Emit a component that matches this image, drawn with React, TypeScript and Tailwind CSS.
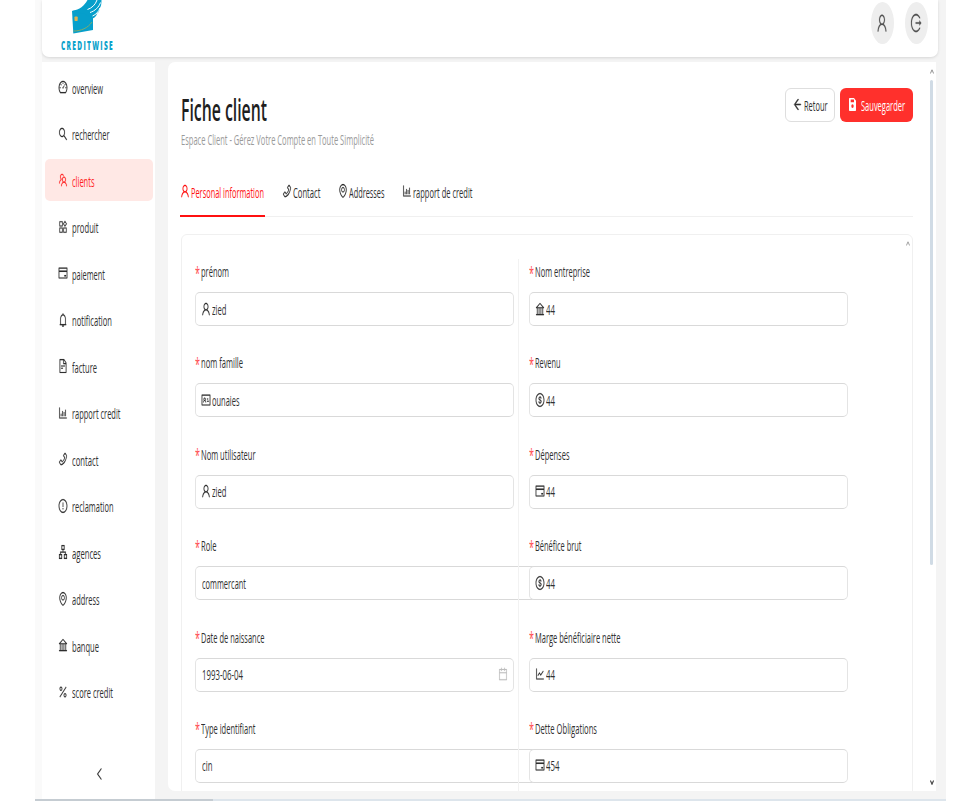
import { useLayoutEffect, useRef, useState } from "react";
import type { ReactNode } from "react";
import type { IconType } from "react-icons";
import {
  AiOutlineApartment,
  AiOutlineArrowLeft,
  AiOutlineBank,
  AiOutlineBarChart,
  AiOutlineBell,
  AiOutlineCalendar,
  AiOutlineCreditCard,
  AiOutlineDashboard,
  AiOutlineDollar,
  AiOutlineEnvironment,
  AiOutlineExclamationCircle,
  AiOutlineFileText,
  AiOutlineIdcard,
  AiOutlineLeft,
  AiOutlineLineChart,
  AiOutlineLogout,
  AiOutlinePercentage,
  AiOutlinePhone,
  AiOutlineProduct,
  AiOutlineSearch,
  AiOutlineTeam,
  AiOutlineUser,
} from "react-icons/ai";

/** Condensed text: squeezes its content horizontally to the given width. */
function Narrow({ w, children, className = "" }: { w: number; children: ReactNode; className?: string }) {
  const ref = useRef<HTMLSpanElement>(null);
  const [scale, setScale] = useState(0.55);
  useLayoutEffect(() => {
    if (ref.current) setScale(w / ref.current.getBoundingClientRect().width * scale);
    // eslint-disable-next-line
  }, [w]);
  return (
    <span className={`block shrink-0 ${className}`} style={{ width: w }}>
      <span
        ref={ref}
        className="inline-block origin-left whitespace-nowrap"
        style={{ transform: `scaleX(${scale})` }}
      >
        {children}
      </span>
    </span>
  );
}

function Icon({ as: As, className = "h-[16px] w-[10px]" }: { as: IconType; className?: string }) {
  return <As preserveAspectRatio="none" className={`shrink-0 stroke-[10px] ${className}`} />;
}

const menu: { label: string; w: number; icon: IconType }[] = [
  { label: "overview", w: 31, icon: AiOutlineDashboard },
  { label: "rechercher", w: 37.5, icon: AiOutlineSearch },
  { label: "clients", w: 22.5, icon: AiOutlineTeam },
  { label: "produit", w: 26.5, icon: AiOutlineProduct },
  { label: "paiement", w: 33, icon: AiOutlineCreditCard },
  { label: "notification", w: 40, icon: AiOutlineBell },
  { label: "facture", w: 25, icon: AiOutlineFileText },
  { label: "rapport credit", w: 48.5, icon: AiOutlineBarChart },
  { label: "contact", w: 26.5, icon: AiOutlinePhone },
  { label: "reclamation", w: 41.5, icon: AiOutlineExclamationCircle },
  { label: "agences", w: 29, icon: AiOutlineApartment },
  { label: "address", w: 27.5, icon: AiOutlineEnvironment },
  { label: "banque", w: 27, icon: AiOutlineBank },
  { label: "score credit", w: 41, icon: AiOutlinePercentage },
];

type FieldData = {
  label: string;
  lw: number;
  value: string;
  vw: number;
  icon?: IconType;
  wide?: boolean;
  date?: boolean;
};

const leftFields: FieldData[] = [
  { label: "prénom", lw: 28, value: "zied", vw: 14.5, icon: AiOutlineUser },
  { label: "nom famille", lw: 42, value: "ounaies", vw: 27.5, icon: AiOutlineIdcard },
  { label: "Nom utilisateur", lw: 54.5, value: "zied", vw: 14.5, icon: AiOutlineUser },
  { label: "Role", lw: 15.5, value: "commercant", vw: 44, wide: true },
  { label: "Date de naissance", lw: 63.5, value: "1993-06-04", vw: 41, date: true },
  { label: "Type identifiant", lw: 54.5, value: "cin", vw: 10.5, wide: true },
];

const rightFields: FieldData[] = [
  { label: "Nom entreprise", lw: 55, value: "44", vw: 9, icon: AiOutlineBank },
  { label: "Revenu", lw: 25.5, value: "44", vw: 9, icon: AiOutlineDollar },
  { label: "Dépenses", lw: 34.5, value: "44", vw: 9, icon: AiOutlineCreditCard },
  { label: "Bénéfice brut", lw: 46.5, value: "44", vw: 9, icon: AiOutlineDollar },
  { label: "Marge bénéficiaire nette", lw: 85.5, value: "44", vw: 9, icon: AiOutlineLineChart },
  { label: "Dette Obligations", lw: 62, value: "454", vw: 13.5, icon: AiOutlineCreditCard },
];

function Field({ f }: { f: FieldData }) {
  return (
    <div className="h-[91.4px] shrink-0">
      <div className="flex h-[33px] items-center pb-[9px]">
        <Narrow w={5} className="mr-[1px] pt-[3px] text-[18px] leading-[22px] text-[#ff4d4f]">*</Narrow>
        <Narrow w={f.lw}>{f.label}</Narrow>
      </div>
      <div
        className={`flex h-[34px] items-center rounded-[5px] border border-x-[#e4e4e4] border-y-[#d9d9d9] bg-white pb-[1px] ${
          f.icon ? "pl-[5px]" : "pl-[6px]"
        } pr-[5px] ${f.wide ? "w-[345px]" : "w-[319px]"}`}
      >
        {f.icon && <Icon as={f.icon} className="mr-[0.5px] h-[16px] w-[10px]" />}
        <Narrow w={f.vw}>{f.value}</Narrow>
        {f.date && <Icon as={AiOutlineCalendar} className="ml-auto h-[16px] w-[10px] text-[#bfbfbf]" />}
      </div>
    </div>
  );
}

function Logo() {
  return (
    <div className="flex w-[52px] flex-col items-center">
      <svg width="52" height="38" viewBox="0 0 52 38">
        <path d="M11 11 L32 7.500 L32 30 L12.300 33.500 Z" fill="#069fcb" />
        <path
          d="M11 11 C19 9.500 23 6 26.500 0 L40.500 0 C40.500 4 40 7 38.500 8.500 C38.500 11 37.500 12.500 36 13.500 C35.500 16 34 17.500 31.500 18.500 L24 14 Z"
          fill="#069fcb"
        />
        <path
          d="M26.500 9.500 C31 8 34.500 4.500 36 0 M29 12.500 C34 11 38 7 39.500 2.500 M31.500 16 C35 14.500 37.500 12 39 8"
          stroke="#fff"
          strokeWidth="1"
          fill="none"
        />
        <rect x="13.500" y="16.500" width="3.200" height="4.500" rx="0.800" fill="#e0b352" />
        <path d="M12.500 31 C20 31 27 28 31 22" stroke="#7fac6c" strokeWidth="1" fill="none" />
      </svg>
      <Narrow w={53} className="mt-[1px] ml-[1px] text-[11.5px] leading-[14px] font-extrabold tracking-[2.3px] text-[#0ba2cb]">
        CREDITWISE
      </Narrow>
    </div>
  );
}

function SaveGlyph() {
  return (
    <svg className="h-[13px] w-[7px] shrink-0" viewBox="0 0 7 13" preserveAspectRatio="none">
      <path
        fillRule="evenodd"
        fill="currentColor"
        d="M0.700 0 H5 L7 2.800 V12.200 Q7 13 6.300 13 H0.700 Q0 13 0 12.200 V0.800 Q0 0 0.700 0 Z M1.700 1.600 V4.200 H5 V1.600 Z M3.500 6.200 A1.200 1.900 0 1 0 3.500 10 A1.200 1.900 0 1 0 3.500 6.200 Z"
      />
    </svg>
  );
}

const tabs: { label: string; w: number; icon: IconType }[] = [
  { label: "Personal information", w: 73, icon: AiOutlineUser },
  { label: "Contact", w: 27.5, icon: AiOutlinePhone },
  { label: "Addresses", w: 35.5, icon: AiOutlineEnvironment },
  { label: "rapport de credit", w: 59.5, icon: AiOutlineBarChart },
];

export default function App() {
  return (
    <div className="h-[812px] w-[953px] overflow-hidden bg-white pl-[35px] font-['Open_Sans','Noto_Sans',sans-serif] text-[15px] leading-[22px] text-[#303030]">
      <div className="flex h-[799px] w-[911px] flex-col bg-[#f4f4f4]">
        <header className="flex h-[62px] shrink-0 bg-linear-to-r from-[#fafafa] from-[7px] to-[#f4f4f4] to-[7px] pr-[8px] pl-[7px]">
          <div className="flex h-[57px] w-full items-start justify-between rounded-b-[7px] bg-white pr-[10.5px] pl-[19px] shadow-[0_1px_3px_rgba(0,0,0,0.12)]">
            <Logo />
            <div className="flex gap-[11px] pt-[2px] text-[#505050]">
              <div className="flex h-[42px] w-[23px] items-center justify-center rounded-[50%] bg-[#eeeeee]">
                <Icon as={AiOutlineUser} className="h-[22px] w-[12px]" />
              </div>
              <div className="flex h-[42px] w-[23px] items-center justify-center rounded-[50%] bg-[#eeeeee]">
                <Icon as={AiOutlineLogout} className="h-[22px] w-[12px]" />
              </div>
            </div>
          </div>
        </header>

        <div className="flex min-h-0 flex-1">
          <div className="w-[7px] shrink-0 bg-[#fafafa]" />
          <nav className="flex w-[113px] shrink-0 flex-col bg-white pr-[2px] pl-[3px] pt-[4px]">
            {menu.map((m) => (
              <div
                key={m.label}
                className={`mb-[4.5px] flex h-[42px] shrink-0 items-center rounded-[5px] pl-[12.5px] ${
                  m.label === "clients" ? "bg-[#ffe8e5] text-[#ff2222]" : ""
                }`}
              >
                <Icon as={m.icon} className="mr-[4.5px] h-[16px] w-[10px]" />
                <Narrow w={m.w} className="pt-[1px]">{m.label}</Narrow>
              </div>
            ))}
            <div className="flex flex-1 items-center justify-center pt-[32px]">
              <Icon as={AiOutlineLeft} className="h-[16px] w-[9px]" />
            </div>
          </nav>

          <main className="ml-[13px] flex h-[729px] w-[768px] shrink-0 overflow-hidden rounded-l-[7px] bg-white pt-[1px]">
            <div className="flex w-[745px] flex-col overflow-hidden pl-[13px]">
              <div className="flex h-[113px] shrink-0 justify-between">
                <div className="pt-[28px]">
                  <Narrow w={86} className="h-[37px] text-[30px] leading-[38px] font-semibold text-[#1f1f1f]">
                    Fiche client
                  </Narrow>
                  <Narrow w={193} className="text-[#9a9a9a]">
                    Espace Client - Gérez Votre Compte en Toute Simplicité
                  </Narrow>
                </div>
                <div className="flex gap-[5px] pt-[25px]">
                  <div className="flex h-[34px] w-[50px] items-center justify-center gap-[2px] rounded-[6px] border border-[#dedede] pb-[1px]">
                    <Icon as={AiOutlineArrowLeft} className="h-[15px] w-[9px] stroke-[45px]" />
                    <Narrow w={23.5}>Retour</Narrow>
                  </div>
                  <div className="flex h-[34px] w-[73px] items-center justify-center gap-[5px] rounded-[6px] bg-[#ff302c] pb-[1px] text-white">
                    <SaveGlyph />
                    <Narrow w={44}>Sauvegarder</Narrow>
                  </div>
                </div>
              </div>

              <div className="flex h-[41px] shrink-0 gap-[17.3px] border-b border-[#f0f0f0]">
                {tabs.map((t, i) => (
                  <div
                    key={t.label}
                    className={`flex h-[41px] items-start gap-[1px] pt-[5px] ${
                      i === 0 ? "-ml-[1px] w-[85px] border-b-2 border-[#ff1010] text-[#ff1010]" : ""
                    }`}
                  >
                    <Icon as={t.icon} className="mt-[2px] h-[16px] w-[10px]" />
                    <Narrow w={t.w}>{t.label}</Narrow>
                  </div>
                ))}
              </div>

              <div className="mt-[17px] flex h-[600px] shrink-0 rounded-t-[6px] border border-[#f0f0f0] pt-[24px] pl-[13px]">
                <div className="w-[323px] shrink-0">
                  {leftFields.map((f) => (
                    <Field key={f.label} f={f} />
                  ))}
                </div>
                <div className="z-10 w-[330px] shrink-0 border-l border-[#f2f2f2] pl-[10px]">
                  {rightFields.map((f) => (
                    <Field key={f.label} f={f} />
                  ))}
                </div>
                <svg className="-mt-[18px] ml-auto mr-[2px] h-[5px] w-[4px] text-[#999]" viewBox="0 0 5 5" preserveAspectRatio="none">
                  <path d="M0.500 4.500 L2.500 0.800 L4.500 4.500" stroke="currentColor" fill="none" />
                </svg>
              </div>
            </div>

            <div className="ml-auto flex w-[10px] flex-col items-center py-[6px] pl-[1px]">
              <svg className="h-[5px] w-[4px] text-[#888]" viewBox="0 0 5 5" preserveAspectRatio="none">
                <path d="M0.500 4.500 L2.500 0.800 L4.500 4.500" stroke="currentColor" fill="none" />
              </svg>
              <div className="mt-[6px] h-[485px] w-[3px] rounded-full bg-[#d0dbe5]" />
              <svg className="mt-auto h-[5px] w-[4px] text-[#444]" viewBox="0 0 5 5" preserveAspectRatio="none">
                <path d="M0.500 0.500 L2.500 4.200 L4.500 0.500" stroke="currentColor" strokeWidth="1.400" fill="none" />
              </svg>
            </div>
          </main>
        </div>
      </div>
      <div className="flex h-[2px] w-[911px] bg-[#dde5ec]">
        <div className="w-[178px] bg-[#c5ccd2]" />
      </div>
    </div>
  );
}
